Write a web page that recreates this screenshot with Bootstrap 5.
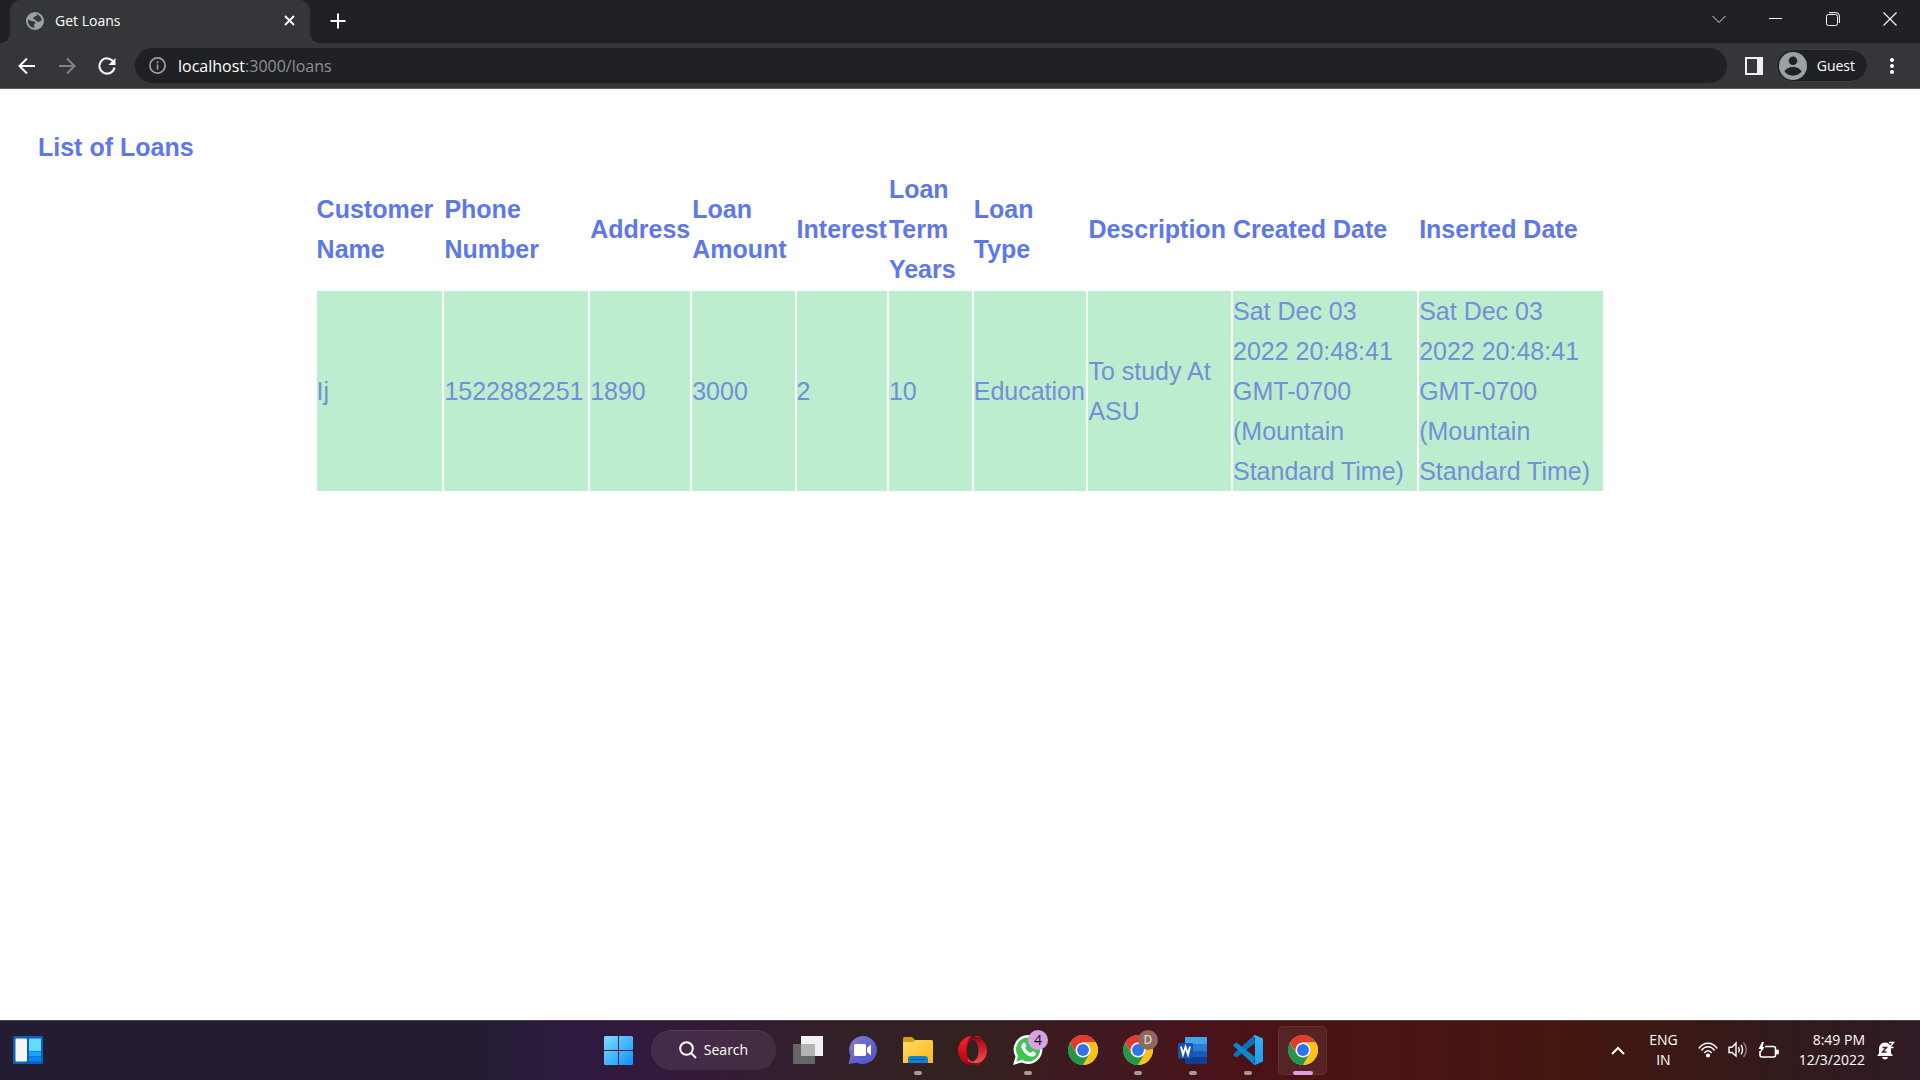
<!DOCTYPE html>
<html lang="en">
<head>
<meta charset="utf-8">
<meta name="viewport" content="width=device-width, initial-scale=1">
<title>Get Loans</title>
<link href="https://cdn.jsdelivr.net/npm/bootstrap@5.3.0/dist/css/bootstrap.min.css" rel="stylesheet">
<style>
  body { font-family: "Open Sans", "Noto Sans", sans-serif; background: #fff; }
  svg { display: block; flex: none; }
  button, input { font-family: inherit; }
  .plain-btn { background: none; border: 0; padding: 0; color: #fff; display: flex; align-items: center; justify-content: center; }

  /* browser window */
  .tab-strip { background: #202124; height: 43px; padding-left: 10px; }
  .browser-tab { position: relative; width: 300px; background: #35363a; border-radius: 10px 10px 0 0; padding: 0 13px 2px 16px; color: #fff; font-size: 14px; }
  .browser-tab::before, .browser-tab::after { content: ""; position: absolute; bottom: 0; width: 10px; height: 10px; }
  .browser-tab::before { left: -10px; background: radial-gradient(circle at 0 0, #202124 10px, #35363a 10px); }
  .browser-tab::after { right: -10px; background: radial-gradient(circle at 100% 0, #202124 10px, #35363a 10px); }
  .tab-title { margin-left: 11px; }
  .new-tab { margin-left: 18px; width: 19px; padding-bottom: 1px; }
  .window-buttons { padding: 0 2px 6px 0; }
  .window-btn { width: 57px; }
  .toolbar { background: #35363a; height: 46px; border-bottom: 1px solid #5d5e61; padding: 0 20px 0 17px; }
  .nav-btn { width: 20px; margin-right: 20px; }
  .omnibox { height: 35px; background: #202124; border-radius: 18px; padding: 0 14px; margin: 0 18px 0 -2px; }
  .address { margin-left: 12px; font-size: 16px; color: #fff; }
  .address span { color: #8e9195; }
  .profile { height: 33px; border-radius: 17px; background: #202124; border: 1px solid #3e3f43; padding: 0 12px 0 2px; font-size: 14px; margin: 0 16px 0 13px; }
  .profile svg { margin-right: 10px; }

  /* loans page */
  .loan-page { padding: 38px; font: 25px/40px "Liberation Sans", Arial, sans-serif; color: #5e78ea; }
  .loan-page h1 { font-size: 25px; line-height: 40px; font-weight: 700; margin: 0; }
  .loan-table { width: 70%; margin: 0 auto; border-collapse: separate; border-spacing: 2px; }
  .loan-table th, .loan-table td { padding: 0; text-align: left; vertical-align: middle; }
  .loan-table td { background: #bcedce; color: #738fd8; }

  /* taskbar */
  .taskbar { height: 60px; border-top: 1px solid #4b4146; padding-bottom: 1px; color: #fff; font-size: 14px; line-height: 20px;
    background: linear-gradient(90deg, #241c33 0, #241c33 25%, #2d1a40 30%, #35193a 36%, #33202a 43%, #33211f 50%, #401920 57%, #4a1219 64%, #4a1312 70%, #421710 83%, #331a1a 92%, #2f1a25 100%); }
  .side { flex: 1 1 0; }
  .widgets-side { padding-left: 3px; }
  .task-list { margin-left: 33px; }
  .task-app { position: relative; width: 49px; height: 49px; margin-right: 6px; border-radius: 5px; }
  .task-app.open::after { content: ""; position: absolute; bottom: 0; width: 8px; height: 4px; border-radius: 2px; background: #a39a9c; }
  .task-app.active { background: #ffffff12; box-shadow: inset 0 0 0 1px #ffffff10; margin-right: 0; }
  .task-app.active::after { width: 20px; background: #dba0e4; }
  .app-badge { position: absolute; top: 4px; right: 4px; width: 20px; height: 20px; border-radius: 50%; font-size: 14px; line-height: 20px; background: #d9a0e3; color: #111; }
  .app-badge.person { background: #8a6a5e; color: #ddd0ca; font-size: 12px; font-weight: 600; }
  .search-btn { width: 125px; height: 40px; border-radius: 20px; background: #ffffff14; box-shadow: inset 0 1px 0 #ffffff12; margin: 0 7px 0 18px; gap: 7px; }
  .tray { gap: 12px; padding-right: 25px; }
  .tray-icons { gap: 10px; }
</style>
<script src="https://cdn.jsdelivr.net/npm/bootstrap@5.3.0/dist/js/bootstrap.bundle.min.js"></script>
</head>
<body class="d-flex flex-column vh-100 overflow-hidden">

<svg width="0" height="0" class="position-absolute" aria-hidden="true">
  <defs>
    <symbol id="chrome" viewBox="0 0 48 48">
      <circle cx="24" cy="24" r="23.5" fill="#fff"/>
      <path fill="#e33b2e" d="M24 12H44.8A24 24 0 0 0 3.2 12L13.6 30Z"/>
      <path fill="#fbc116" d="M34.4 30 24 48A24 24 0 0 0 44.8 12H24Z"/>
      <path fill="#269547" d="M13.6 30 3.2 12A24 24 0 0 0 24 48L34.4 30Z"/>
      <circle cx="24" cy="24" r="12" fill="#fff"/>
      <circle cx="24" cy="24" r="9.5" fill="#2f74e8"/>
    </symbol>
    <linearGradient id="winblue" x1="0" y1="0" x2="1" y2="1"><stop stop-color="#7fdcff"/><stop offset="1" stop-color="#0a92fb"/></linearGradient>
    <linearGradient id="folder" x1="0" y1="0" x2="1" y2="1"><stop stop-color="#ffd968"/><stop offset="1" stop-color="#fdb91b"/></linearGradient>
    <linearGradient id="chat" x1="0" y1="0" x2="1" y2="1"><stop stop-color="#8d7fc6"/><stop offset=".5" stop-color="#6266cc"/><stop offset="1" stop-color="#4a50cf"/></linearGradient>
    <linearGradient id="opera" x1="0" y1="0" x2="0" y2="1"><stop stop-color="#ff1f30"/><stop offset="1" stop-color="#b00010"/></linearGradient>
    <linearGradient id="operain" x1="0" y1="0" x2="0" y2="1"><stop stop-color="#a3050f"/><stop offset="1" stop-color="#ff4a50"/></linearGradient>
    <linearGradient id="vsc" x1="0" y1="0" x2="0" y2="1"><stop stop-color="#2fb2fb"/><stop offset="1" stop-color="#1f9bee"/></linearGradient>
  </defs>
</svg>

<header>
  <div class="tab-strip d-flex">
    <div class="browser-tab d-flex align-items-center">
      <svg width="18" height="18" viewBox="0 0 18 18"><circle cx="9" cy="9" r="9" fill="#9aa0a6"/><path d="M2 7.5 5.500 9 8.500 9.500 9.500 11 8 12.500 8.500 15.800A7 7 0 0 1 2 7.500ZM9 2 11 2.300 10.500 4 8 4.800 7 7 9 7.500 11 9.500 13.500 9.800 15.800 8A7 7 0 0 0 9 2Z" fill="#35363a"/></svg>
      <span class="tab-title">Get Loans</span>
      <button class="plain-btn ms-auto" aria-label="Close tab"><svg width="15" height="15" viewBox="0 0 15 15" stroke="#fff" stroke-width="1.800"><path d="M3 3 12 12M12 3 3 12"/></svg></button>
    </div>
    <button class="plain-btn new-tab" aria-label="New tab"><svg width="16" height="16" viewBox="0 0 16 16" stroke="#fff" stroke-width="2"><path d="M8 .5V15.500M.5 8H15.500"/></svg></button>
    <div class="window-buttons d-flex ms-auto">
      <button class="plain-btn window-btn" aria-label="Search tabs"><svg width="14" height="14" viewBox="0 0 14 14" fill="none" stroke="#ddd"><path d="M.5 4 7 10.500 13.500 4"/></svg></button>
      <button class="plain-btn window-btn" aria-label="Minimize"><svg width="13" height="13" viewBox="0 0 13 13" stroke="#fff"><path d="M0 6.500H13"/></svg></button>
      <button class="plain-btn window-btn" aria-label="Restore"><svg width="14" height="14" viewBox="0 0 14 14" fill="none" stroke="#fff"><rect x=".5" y="2.500" width="11" height="11" rx="2"/><path d="M3 .6H10A3.400 3.400 0 0 1 13.400 4V11"/></svg></button>
      <button class="plain-btn window-btn" aria-label="Close"><svg width="14" height="14" viewBox="0 0 14 14" stroke="#fff" stroke-width="1.100"><path d="M.5 .5 13.500 13.500M13.500 .5 .5 13.500"/></svg></button>
    </div>
  </div>
  <div class="toolbar d-flex align-items-center">
    <button class="plain-btn nav-btn" aria-label="Back"><svg width="18" height="18" viewBox="0 0 18 18" fill="none" stroke="#fff" stroke-width="2"><path d="M17 9H2M9 1.500 1.500 9 9 16.500"/></svg></button>
    <button class="plain-btn nav-btn" aria-label="Forward"><svg width="18" height="18" viewBox="0 0 18 18" fill="none" stroke="#838487" stroke-width="2"><path d="M1 9H16M9 1.500 16.500 9 9 16.500"/></svg></button>
    <button class="plain-btn nav-btn" aria-label="Reload"><svg width="18" height="18" viewBox="0 0 18 18"><path d="M15.200 4.500A7.600 7.600 0 1 0 16.500 10.500" fill="none" stroke="#fff" stroke-width="2"/><path d="M17.500 1V8H10.500Z" fill="#fff"/></svg></button>
    <div class="omnibox d-flex align-items-center flex-grow-1">
      <svg width="17" height="17" viewBox="0 0 17 17"><circle cx="8.500" cy="8.500" r="7.600" fill="none" stroke="#9aa0a6" stroke-width="1.700"/><path d="M8.500 7.500V12.500M8.500 4.300V6.200" stroke="#9aa0a6" stroke-width="1.700"/></svg>
      <div class="address" role="textbox" aria-label="Address bar">localhost<span>:3000/loans</span></div>
    </div>
    <button class="plain-btn" aria-label="Side panel"><svg width="18" height="18" viewBox="0 0 18 18"><rect x="1" y="1" width="16" height="16" fill="none" stroke="#f1f1f4" stroke-width="2"/><path d="M12 1H17V17H12Z" fill="#f1f1f4"/></svg></button>
    <button class="plain-btn profile"><svg width="28" height="28" viewBox="0 0 28 28"><circle cx="14" cy="14" r="14" fill="#9aa0a6"/><circle cx="14" cy="8.700" r="4.300" fill="#202124"/><path d="M5.500 19.500C8 13.500 20 13.500 22.500 19.500 19 25 9 25 5.500 19.500Z" fill="#202124"/></svg>Guest</button>
    <button class="plain-btn" aria-label="Menu"><svg width="16" height="18" viewBox="0 0 16 18" fill="#fff"><circle cx="8" cy="3" r="2"/><circle cx="8" cy="9" r="2"/><circle cx="8" cy="15" r="2"/></svg></button>
  </div>
</header>

<main class="loan-page flex-grow-1">
  <h1>List of Loans</h1>
  <table class="loan-table">
    <thead>
      <tr><th>Customer Name</th><th>Phone Number</th><th>Address</th><th>Loan Amount</th><th>Interest</th><th>Loan Term Years</th><th>Loan Type</th><th>Description</th><th>Created Date</th><th>Inserted Date</th></tr>
    </thead>
    <tbody>
      <tr><td>Ij</td><td>1522882251</td><td>1890</td><td>3000</td><td>2</td><td>10</td><td>Education</td><td>To study At ASU</td><td>Sat Dec 03 2022 20:48:41 GMT-0700 (Mountain Standard Time)</td><td>Sat Dec 03 2022 20:48:41 GMT-0700 (Mountain Standard Time)</td></tr>
    </tbody>
  </table>
</main>

<footer class="taskbar d-flex align-items-center">
  <div class="side widgets-side">
    <button class="plain-btn task-app" aria-label="Widgets"><svg width="30" height="28" viewBox="0 0 30 28"><rect width="30" height="28" rx="1.500" fill="#0b62b5"/><rect x="2.500" y="2.500" width="11.500" height="23" rx="1" fill="#f6f6f6"/><path d="M16 2.500H28V15H16Z" fill="#66d9ff"/><path d="M16 15.500H28V20H16Z" fill="#1ba2ff"/><path d="M16 20.500H28V25.500H16Z" fill="#0a86ef"/></svg></button>
  </div>
  <nav class="task-list d-flex align-items-center" aria-label="Taskbar">
    <button class="plain-btn" aria-label="Start"><svg width="29" height="29" viewBox="0 0 29 29" fill="url(#winblue)"><path d="M1 0H14V14H0V1ZM15 0H28L29 1V14H15ZM0 15H14V29H1L0 28ZM15 15H29V28L28 29H15Z"/></svg></button>
    <button class="plain-btn search-btn"><svg width="18" height="18" viewBox="0 0 18 18" fill="none" stroke="#fff" stroke-width="2"><circle cx="7.500" cy="7.500" r="6.300"/><path d="M12 12 17 17"/></svg>Search</button>
    <button class="plain-btn task-app" aria-label="Task view"><svg width="30" height="28" viewBox="0 0 30 28"><path d="M8 0H30V20H8Z" fill="#f1f1f1"/><path d="M0 8H22V28H0Z" fill="#666"/><path d="M8 8H22V20H8Z" fill="#b4b4b4"/></svg></button>
    <button class="plain-btn task-app" aria-label="Chat"><svg width="29" height="28" viewBox="0 0 29 28"><path d="M15 0A14 14 0 1 1 9 26.700L.5 28 2.500 20A14 14 0 0 1 15 0Z" fill="url(#chat)"/><rect x="6" y="8" width="12" height="12" rx="1.500" fill="#fff"/><path d="M19 12 23 8.500V19.500L19 16Z" fill="#fff"/></svg></button>
    <button class="plain-btn task-app open" aria-label="File Explorer"><svg width="30" height="26" viewBox="0 0 30 26"><path d="M0 10V1.500Q0 0 1.500 0H9L12 3H28V10Z" fill="#dc9d0c"/><path d="M0 5H10L13 3H28.500Q30 3 30 4.500V26H0Z" fill="url(#folder)"/><path d="M5 26V22Q5 19 8 19H22Q25 19 25 22V26Z" fill="#1280d2"/><path d="M8 22H22V23H8Z" fill="#0a4f93"/></svg></button>
    <button class="plain-btn task-app" aria-label="Opera"><svg width="29" height="29" viewBox="0 0 29 29"><path fill="url(#operain)" d="M9.500 4A14.500 14.500 0 0 1 24 3.500 14.500 14.500 0 0 1 24 25.500 14.500 14.500 0 0 1 9.500 25Z"/><path fill="url(#opera)" d="M14.500 0A14.500 14.500 0 0 0 14.500 29Q19 29 23.500 26A9 12 0 0 1 9.500 24V5A9 12 0 0 1 23.500 3Q19 0 14.500 0Z"/><ellipse cx="14.500" cy="14.500" rx="6" ry="11" fill="#33211f"/></svg></button>
    <button class="plain-btn task-app open" aria-label="WhatsApp"><svg width="30" height="30" viewBox="0 0 30 30"><path d="M15.500 0A14.500 14.500 0 1 1 8.500 27.500L0 30 2.500 21.500A14.500 14.500 0 0 1 15.500 0Z" fill="#fff"/><path d="M15.500 2.500A12 12 0 1 1 9 24.800L3.500 26.500 5 21A12 12 0 0 1 15.500 2.500Z" fill="#3fc351"/><path d="M10.500 7.500C12 7 12.300 8 13.300 11 12.500 12.500 12 12.500 12.500 13.500 14 16 15.500 17 17.500 18L19.500 16 23 18C23 21 20 22 18 21.500 13 20 10.500 17.500 8.500 13 7.800 10.500 9 8.500 10.500 7.500Z" fill="#fff"/></svg><span class="app-badge">4</span></button>
    <button class="plain-btn task-app" aria-label="Chrome"><svg width="30" height="30"><use href="#chrome"/></svg></button>
    <button class="plain-btn task-app open" aria-label="Chrome, second profile"><svg width="30" height="30"><use href="#chrome"/></svg><span class="app-badge person">D</span></button>
    <button class="plain-btn task-app open" aria-label="Word"><svg width="29" height="27" viewBox="0 0 29 27"><path d="M7 0H29V7H7Z" fill="#41a5ee"/><path d="M7 7H29V14H7Z" fill="#2b7cd3"/><path d="M7 14H29V20.500H7Z" fill="#185abd"/><path d="M7 20.500H29V27H7Z" fill="#103f91"/><rect y="6" width="15" height="15.500" rx="1" fill="#1853b0"/><path d="M3 9.500 5 17.500 7.500 10 10 17.500 12 9.500" fill="none" stroke="#fff" stroke-width="1.900"/></svg></button>
    <button class="plain-btn task-app open" aria-label="Visual Studio Code"><svg width="30" height="30" viewBox="0 0 30 30"><path d="M22 8 3.500 22.500 .5 20.500V19L20.500 .8Z" fill="#0a72b8"/><path d="M22 22 3.500 7.500 .5 9.500V11L20.500 29.200Z" fill="#0c85d0"/><path d="M22 0 30 3.500V26.500L22 30 20 29 22 27V3L20 1Z" fill="url(#vsc)"/></svg></button>
    <button class="plain-btn task-app open active" aria-label="Chrome, Get Loans"><svg width="30" height="30"><use href="#chrome"/></svg></button>
  </nav>
  <div class="side tray d-flex align-items-center justify-content-end">
    <button class="plain-btn me-2" aria-label="Hidden icons"><svg width="14" height="9" viewBox="0 0 14 9" fill="none" stroke="#fff" stroke-width="2"><path d="M1 8 7 2 13 8"/></svg></button>
    <button class="plain-btn mx-1">ENG<br>IN</button>
    <button class="plain-btn tray-icons ms-1" aria-label="Network, volume, battery">
      <svg width="20" height="16" viewBox="0 0 20 16" fill="none" stroke="#fff" stroke-width="1.400"><path d="M.8 6.500C5.500-.5 14.500-.5 19.200 6.500M3.500 8.500C7 3.500 13 3.500 16.500 8.500M6.300 11C8.500 8 11.500 8 13.700 11"/><circle cx="10" cy="13.500" r="1.400" fill="#fff"/></svg>
      <svg width="20" height="18" viewBox="0 0 20 18" fill="none" stroke="#fff" stroke-width="1.400"><path d="M1 6.300H4L8 2V15L4 11.500H1Z"/><path d="M10.500 6Q12 8.700 10.500 11.500M13 4Q16 8.700 13 13.500"/><path d="M15.500 1.500Q21 8.700 15.500 16" stroke="#8b7775"/></svg>
      <svg width="21" height="17" viewBox="0 0 21 17" fill="none" stroke="#fff" stroke-width="1.600"><path d="M7 4.500H15.500Q17.500 4.500 17.500 6.500V13Q17.500 15 15.500 15H4Q2 15 2 13V9"/><path d="M18 8.500H20V11.500H18" fill="#fff"/><path d="M4 0 .5 7H3L2 12 6.500 5H4.500L6 0Z" fill="#fff" stroke="none"/></svg>
    </button>
    <button class="plain-btn text-end ms-2">8:49 PM<br>12/3/2022</button>
    <button class="plain-btn" aria-label="Notifications"><svg width="18" height="19" viewBox="0 0 18 19"><path d="M1 14 2 12V8Q2 2 8 1.500 14 2 14 8V12L16 15H0ZM5 16H11Q10.500 18.500 8 18.500T5 16Z" fill="#fff"/><path d="M5.500 6.500H9.500L5.500 11H9.500" fill="none" stroke="#3a1f22" stroke-width="1.400"/><path d="M12 1.500H16.500L12.500 6.500H16.500" fill="none" stroke="#fff" stroke-width="1.400"/></svg></button>
  </div>
</footer>
</body>
</html>
